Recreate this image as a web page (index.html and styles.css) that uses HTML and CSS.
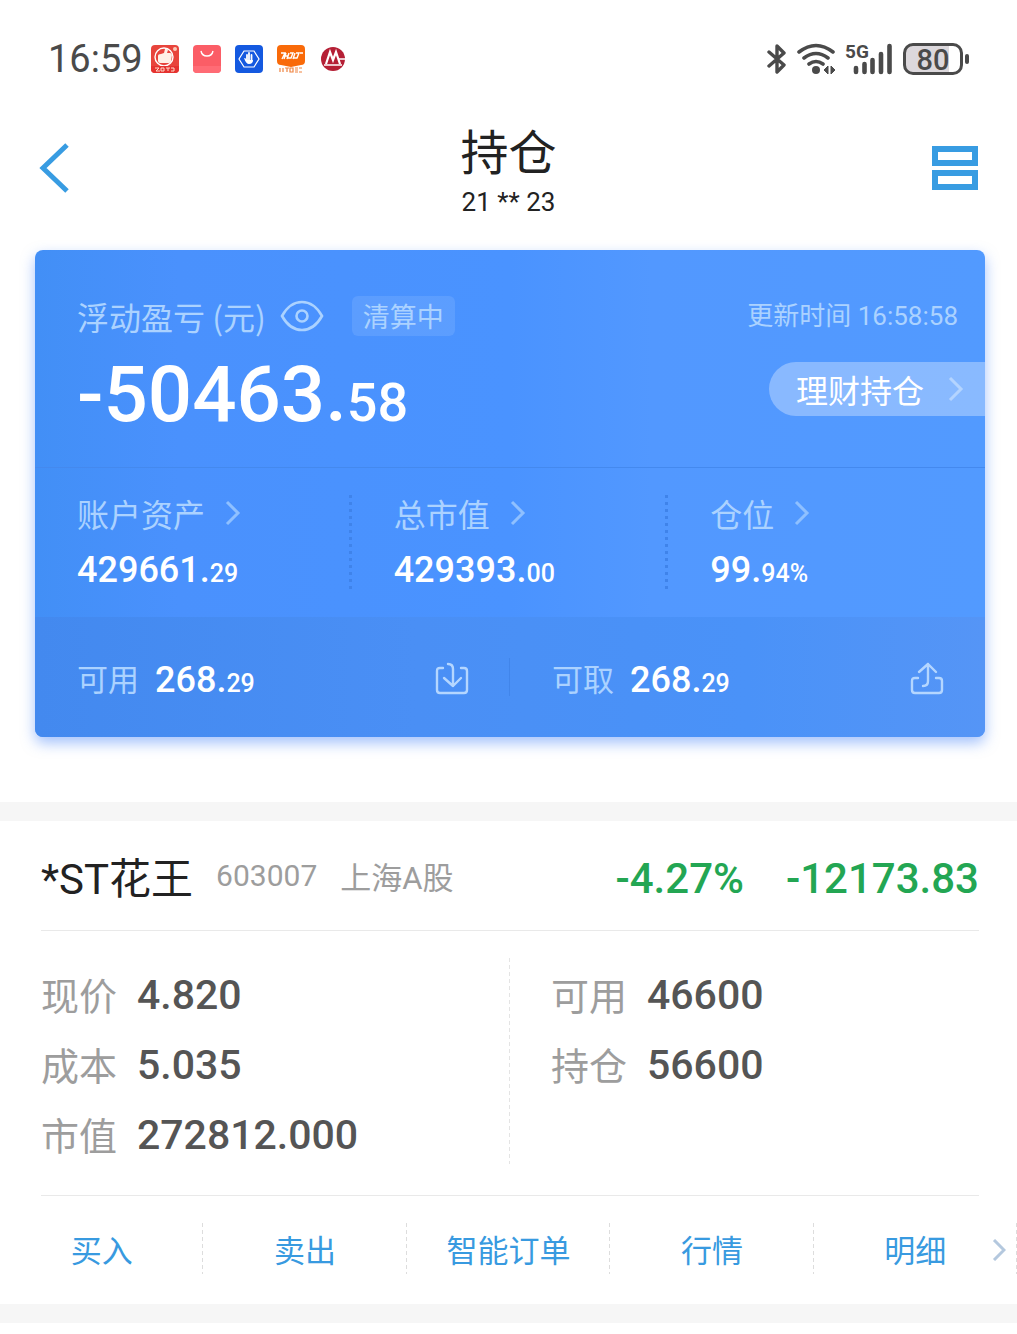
FILE: index.html
```html
<!DOCTYPE html>
<html lang="zh-CN">
<head>
  <meta charset="UTF-8" />
  <meta name="viewport" content="width=device-width, initial-scale=1.0" />
  <title>持仓</title>
  <link rel="stylesheet" href="styles.css">
</head>
<body>

  <div class="status-bar">
    <div class="status-left">
      <span class="clock">16:59</span>
      <svg width="28" height="28" viewBox="0 0 28 28">
        <rect width="28" height="28" rx="4" fill="#e8443c"/>
        <circle cx="13" cy="12" r="9" fill="none" stroke="#fff" stroke-width="1.4"/>
        <path d="M7 11q0-2 3-2l3-1 1-4q3-1 3 1l-1 3h3q2 0 2 2l-1 6q0 2-3 2h-8q-2 0-2-2z" fill="#fff0e6"/>
        <circle cx="24" cy="4" r="2" fill="#f9c9b8"/>
        <path d="M0 21h28v3q0 4-4 4H4q-4 0-4-4z" fill="#e5322f"/>
        <path d="M4 23h4l-3 3h4m1-3h3v3h-3zm5 0h4m-2 0v3m3-3h3v3h-3" fill="none" stroke="#ffd9c9" stroke-width="1"/>
      </svg>
      <svg width="28" height="28" viewBox="0 0 28 28">
        <rect width="28" height="28" rx="4" fill="#fb5d66"/>
        <path d="M0 21h28v3q0 4-4 4H4q-4 0-4-4z" fill="#ff6b75"/>
        <path d="M8 6q1 5 6 5t6-5" fill="none" stroke="#fff" stroke-width="1.4"/>
      </svg>
      <svg width="28" height="28" viewBox="0 0 28 28">
        <rect width="28" height="28" rx="4" fill="#1459e0"/>
        <path d="M9 6h10l5 8-5 8H9l-5-8z" fill="none" stroke="#fff" stroke-width="1.2"/>
        <path d="M12 10v6m2-8v8m2.500-6v6" fill="none" stroke="#fff" stroke-width="1.8" stroke-linecap="round"/>
        <path d="M9 13q2 0 3 2h6q0 4-4 4-3 0-5-6z" fill="#fff"/>
      </svg>
      <svg width="28" height="28" viewBox="0 0 28 28">
        <path d="M4 0h20q4 0 4 4v12q0 4-4 4l-10 2-10-2q-4 0-4-4V4q0-4 4-4z" fill="#f96a09"/>
        <path d="M4 8h4l-3 6m4-6-2 6m1-3h3m1-3-2 6m3-6h3l-2 5h-3m7-5-2 6m3-6h3l-2 5h-3m6-5h3" fill="none" stroke="#fff" stroke-width="1.4"/>
        <path d="M3 23v4m3-4v4m2-4h4m-2 0v4m3-4h3v4h-3zm5 0h3m-3 2h3m-3 2h3m1-4h3m-3 4h3" fill="none" stroke="#ef8340" stroke-width="1.2"/>
      </svg>
      <svg width="28" height="28" viewBox="0 0 28 28">
        <circle cx="14" cy="14" r="12" fill="#b51f35"/>
        <path d="M7 19 11 7l3 8 3-8 4 12" fill="none" stroke="#fff" stroke-width="2.200"/>
        <path d="M5 20h18M20 14h7" stroke="#fff" stroke-width="1.6"/>
      </svg>
    </div>
    <div class="status-right">
      <svg width="20" height="32" viewBox="0 0 20 32">
        <path d="M2 9 17 22l-7 7V3l7 7L2 23" fill="none" stroke="#4a4a4a" stroke-width="3.400" stroke-linecap="round" stroke-linejoin="round"/>
      </svg>
      <svg width="40" height="32" viewBox="0 0 40 32">
        <path d="M2 9q17-13 34 0M7 15q12-9 24 0M12 21q7-5 14 0" fill="none" stroke="#4a4a4a" stroke-width="3.600" stroke-linecap="round"/>
        <circle cx="19" cy="27" r="4" fill="#4a4a4a"/>
        <path d="M31 23v8l-4-4zM34 31v-8l4 4z" fill="#4a4a4a" stroke="#4a4a4a"/>
      </svg>
      <div class="signal">
        <span class="signal-type">5G</span>
        <svg width="46" height="32" viewBox="0 0 46 32">
          <path d="M9 25v4M17.500 21v8M25.500 17v12M34 11v18M42.500 3v26" stroke="#4a4a4a" stroke-width="4.600" stroke-linecap="round"/>
        </svg>
      </div>
      <div class="battery"><span class="battery-level">80</span></div>
    </div>
  </div>

  <header class="header">
    <button class="icon-btn" aria-label="返回">
      <svg width="30" height="50" viewBox="0 0 30 50">
        <path d="M28 2 4 25l24 23" fill="none" stroke="#389ce2" stroke-width="5"/>
      </svg>
    </button>
    <div class="header-title">
      <h1>持仓</h1>
      <p>21 ** 23</p>
    </div>
    <button class="icon-btn" aria-label="切换视图">
      <svg width="46" height="44" viewBox="0 0 46 44">
        <path d="M3 3h40v14H3zM3 27h40v14H3z" fill="none" stroke="#389ce2" stroke-width="6"/>
      </svg>
    </button>
  </header>

  <section class="card">
    <div class="summary">
      <div class="summary-main">
        <div class="summary-label">
          <span>浮动盈亏 (元)</span>
          <button class="icon-btn" aria-label="显示金额">
            <svg width="44" height="32" viewBox="0 0 44 32">
              <path d="M2 16C7 7 14 2 22 2s15 5 20 14c-5 9-12 14-20 14S7 25 2 16z" fill="none" stroke="#abd2ff" stroke-width="2.600"/>
              <circle cx="22" cy="16" r="5.500" fill="none" stroke="#abd2ff" stroke-width="2.600"/>
            </svg>
          </button>
          <span class="tag">清算中</span>
        </div>
        <div class="profit">-50463.<small>58</small></div>
      </div>
      <div class="summary-side">
        <span class="update-time">更新时间 16:58:58</span>
        <button class="wealth-btn">理财持仓
          <svg class="chevron" width="16" height="26" viewBox="0 0 16 26"><path d="m2 2 11 11L2 24"/></svg>
        </button>
      </div>
    </div>

    <div class="stats">
      <a class="stat" href="#">
        <span class="stat-label">账户资产
          <svg class="chevron" width="16" height="26" viewBox="0 0 16 26"><path d="m2 2 11 11L2 24"/></svg>
        </span>
        <span class="stat-value">429661.<small>29</small></span>
      </a>
      <a class="stat" href="#">
        <span class="stat-label">总市值
          <svg class="chevron" width="16" height="26" viewBox="0 0 16 26"><path d="m2 2 11 11L2 24"/></svg>
        </span>
        <span class="stat-value">429393.<small>00</small></span>
      </a>
      <a class="stat" href="#">
        <span class="stat-label">仓位
          <svg class="chevron" width="16" height="26" viewBox="0 0 16 26"><path d="m2 2 11 11L2 24"/></svg>
        </span>
        <span class="stat-value">99.<small>94%</small></span>
      </a>
    </div>

    <div class="cash">
      <div class="cash-item">
        <span class="cash-label">可用</span>
        <span class="cash-value">268.<small>29</small></span>
        <button class="icon-btn cash-btn" aria-label="转入">
          <svg width="34" height="34" viewBox="-1 -1 34 34">
            <path d="M7 5H4Q1 5 1 8v19q0 3 3 3h24q3 0 3-3V8q0-3-3-3h-3M12 1q5 0 5 5v17M8 15l9 8 8-8"/>
          </svg>
        </button>
      </div>
      <div class="cash-item">
        <span class="cash-label">可取</span>
        <span class="cash-value">268.<small>29</small></span>
        <button class="icon-btn cash-btn" aria-label="转出">
          <svg width="34" height="34" viewBox="-1 -1 34 34">
            <path d="M7 15H4q-3 0-3 3v9q0 3 3 3h24q3 0 3-3v-9q0-3-3-3h-3M12 23q5 0 5-5V1M8 9l9-8 8 8"/>
          </svg>
        </button>
      </div>
    </div>
  </section>

  <section class="holding">
    <div class="holding-head">
      <h2>*ST花王</h2>
      <span class="code">603007</span>
      <span class="market">上海A股</span>
      <span class="change">-4.27%</span>
      <span class="change-amount">-12173.83</span>
    </div>

    <div class="holding-body">
      <dl>
        <div class="row"><dt>现价</dt><dd>4.820</dd></div>
        <div class="row"><dt>成本</dt><dd>5.035</dd></div>
        <div class="row"><dt>市值</dt><dd>272812.000</dd></div>
      </dl>
      <dl>
        <div class="row"><dt>可用</dt><dd>46600</dd></div>
        <div class="row"><dt>持仓</dt><dd>56600</dd></div>
      </dl>
    </div>

    <nav class="actions">
      <button>买入</button>
      <button>卖出</button>
      <button>智能订单</button>
      <button>行情</button>
      <button>明细</button>
      <svg class="more" width="14" height="22" viewBox="0 0 14 22">
        <path d="m2 1 10 10L2 21" fill="none" stroke="#b4c8de" stroke-width="3"/>
      </svg>
    </nav>
  </section>

</body>
</html>
```
FILE: styles.css
```css
* {
  box-sizing: border-box;
}
body {
  margin: 0;
  background: #fff;
  color: #222;
  font-family: "Noto Sans CJK SC", "Noto Sans", sans-serif;
}
h1, h2, p, dl, dd {
  margin: 0;
  font-weight: normal;
}
button {
  padding: 0;
  border: 0;
  background: none;
  color: inherit;
  font: inherit;
  cursor: pointer;
}
svg {
  display: block;
  flex-shrink: 0;
}

/* anything with digits */
.clock, .header-title, .profit, .update-time, .stat-value, .cash-value, .holding-head, dd {
  font-family: Roboto, "Noto Sans CJK SC", sans-serif;
}

/* status bar */
.status-bar {
  display: flex;
  justify-content: space-between;
  align-items: center;
  height: 118px;
  padding: 0 48px;
  color: #4a4a4a;
}
.status-left {
  display: flex;
  align-items: center;
  gap: 14px;
}
.clock {
  margin-right: -6px;
  font-size: 38px;
  line-height: 40px;
}
.status-right {
  display: flex;
  align-items: center;
  gap: 10px;
}
.signal {
  position: relative;
}
.signal-type {
  position: absolute;
  left: -2px;
  top: 1px;
  font: bold 19px/16px Roboto, sans-serif;
}
.battery {
  position: relative;
  width: 60px;
  height: 32px;
  margin-right: 6px;
  border: 3px solid #4a4a4a;
  border-radius: 10px;
  background: linear-gradient(90deg, #dcd8dc 80%, #fff 80%);
  text-align: center;
}
.battery::after {
  content: "";
  position: absolute;
  right: -9px;
  top: 8px;
  width: 4px;
  height: 10px;
  border-radius: 2px;
  background: #4a4a4a;
}
.battery-level {
  display: block;
  font: 500 29px/28px Roboto, sans-serif;
}

/* header */
.header {
  display: flex;
  justify-content: space-between;
  align-items: center;
  padding: 6px 39px 30px;
}
.header .icon-btn {
  width: 46px;
  padding-bottom: 8px;
}
.header-title {
  text-align: center;
}
.header-title h1 {
  font-size: 48px;
  line-height: 60px;
}
.header-title p {
  font-size: 26px;
  line-height: 36px;
}

/* account card */
.card {
  margin: 0 32px 65px 35px;
  border-radius: 8px;
  overflow: hidden;
  background: linear-gradient(90deg, #428ff6, #4a91fd 15%, #4a93ff 50%, #5298ff 65%, #529aff);
  box-shadow: 0 6px 14px rgba(74, 134, 250, 0.5);
  color: #fff;
}
.summary {
  display: flex;
  justify-content: space-between;
  height: 218px;
  padding: 46px 0 0 42px;
  border-bottom: 1px solid #4489ee;
}
.summary-label {
  display: flex;
  align-items: center;
  gap: 14px;
  height: 40px;
  color: #abd2ff;
  font-size: 32px;
  line-height: 40px;
}
.tag {
  margin-left: 14px;
  padding: 0 11px;
  border-radius: 6px;
  background: rgba(255, 255, 255, 0.1);
  font-size: 27px;
}
.profit {
  font-size: 78px;
  font-weight: 500;
  line-height: 118px;
}
.profit small {
  font-size: 54px;
}
.summary-side {
  display: flex;
  flex-direction: column;
  align-items: flex-end;
  gap: 26px;
}
.update-time {
  padding-right: 27px;
  color: #abd2ff;
  font-size: 26px;
  line-height: 40px;
}
.wealth-btn {
  display: flex;
  align-items: center;
  gap: 24px;
  height: 54px;
  padding: 0 21px 0 27px;
  border-radius: 27px 0 0 27px;
  background: rgba(255, 255, 255, 0.32);
  font-size: 32px;
}
.chevron path {
  fill: none;
  stroke: #8fc0ff;
  stroke-width: 3;
}
.wealth-btn .chevron path {
  stroke: #b4d4ff;
}
.stats {
  display: grid;
  grid-template-columns: repeat(3, 1fr);
  height: 149px;
  padding-top: 27px;
}
.stat {
  display: flex;
  flex-direction: column;
  padding-left: 42px;
  color: #fff;
  text-decoration: none;
}
.stat:not(:last-child) {
  background: repeating-linear-gradient(#3f83ea 0 3px, transparent 3px 7px) right top / 3px 94px no-repeat;
}
.stat-label {
  display: flex;
  align-items: center;
  gap: 20px;
  color: #abd2ff;
  font-size: 32px;
  line-height: 36px;
}
.stat-value, .cash-value {
  font-size: 36px;
  font-weight: 500;
}
.stat-value {
  line-height: 78px;
}
.stat-value small, .cash-value small {
  font-size: 25px;
}
.cash {
  display: grid;
  grid-template-columns: 1fr 1fr;
  height: 120px;
  background: linear-gradient(90deg, #4389ef, #4a8ff5 40%, #4a92f8 75%, #5595f6);
}
.cash-item {
  display: flex;
  align-items: center;
  gap: 16px;
  padding: 0 41px 0 42px;
}
.cash-item:first-child {
  background: linear-gradient(#4185ea, #4185ea) right / 1px 38px no-repeat;
}
.cash-label {
  color: #abd2ff;
  font-size: 31px;
}
.cash-value {
  padding-top: 6px;
}
.cash-btn {
  margin-left: auto;
  padding-top: 4px;
}
.cash-btn path {
  fill: none;
  stroke: #b4d6ff;
  stroke-width: 2.4;
  stroke-linecap: round;
  stroke-linejoin: round;
}

/* holding */
.holding {
  border: solid #f6f6f6;
  border-width: 19px 0;
}
.holding-head {
  display: flex;
  align-items: center;
  height: 110px;
  margin: 0 38px 0 41px;
  border-bottom: 1px solid #e9e9e9;
}
.holding-head h2 {
  font-size: 42px;
}
.code, .market {
  margin-left: 23px;
  color: #9d9d9d;
  font-size: 30px;
}
.market {
  font-size: 31px;
}
.change, .change-amount {
  padding-top: 6px;
  color: #23a653;
  font-size: 42px;
  font-weight: 500;
}
.change {
  margin-left: auto;
}
.change-amount {
  margin-left: 42px;
}
.holding-body {
  display: grid;
  grid-template-columns: 1fr 1fr;
  margin: 0 38px 0 41px;
  padding: 27px 0;
  border-bottom: 1px solid #e9e9e9;
}
.holding-body dl:first-child {
  background: repeating-linear-gradient(#e4e4e4 0 4px, transparent 4px 7px) right top / 1px 206px no-repeat;
}
.holding-body dl:last-child {
  padding-left: 41px;
}
.row {
  display: flex;
  align-items: center;
  gap: 20px;
  height: 70px;
}
.row dt {
  color: #9d9d9d;
  font-size: 38px;
}
.row dd {
  padding-top: 4px;
  color: #555;
  font-size: 41px;
  font-weight: 500;
}
.actions {
  position: relative;
  display: grid;
  grid-template-columns: repeat(5, 1fr);
  padding: 27px 0 30px;
}
.actions button {
  height: 51px;
  background: repeating-linear-gradient(#ddd 0 4px, transparent 4px 7px) right / 1px 100% no-repeat;
  color: #389ae0;
  font-size: 31px;
}
.more {
  position: absolute;
  right: 11px;
  top: 43px;
}
```
